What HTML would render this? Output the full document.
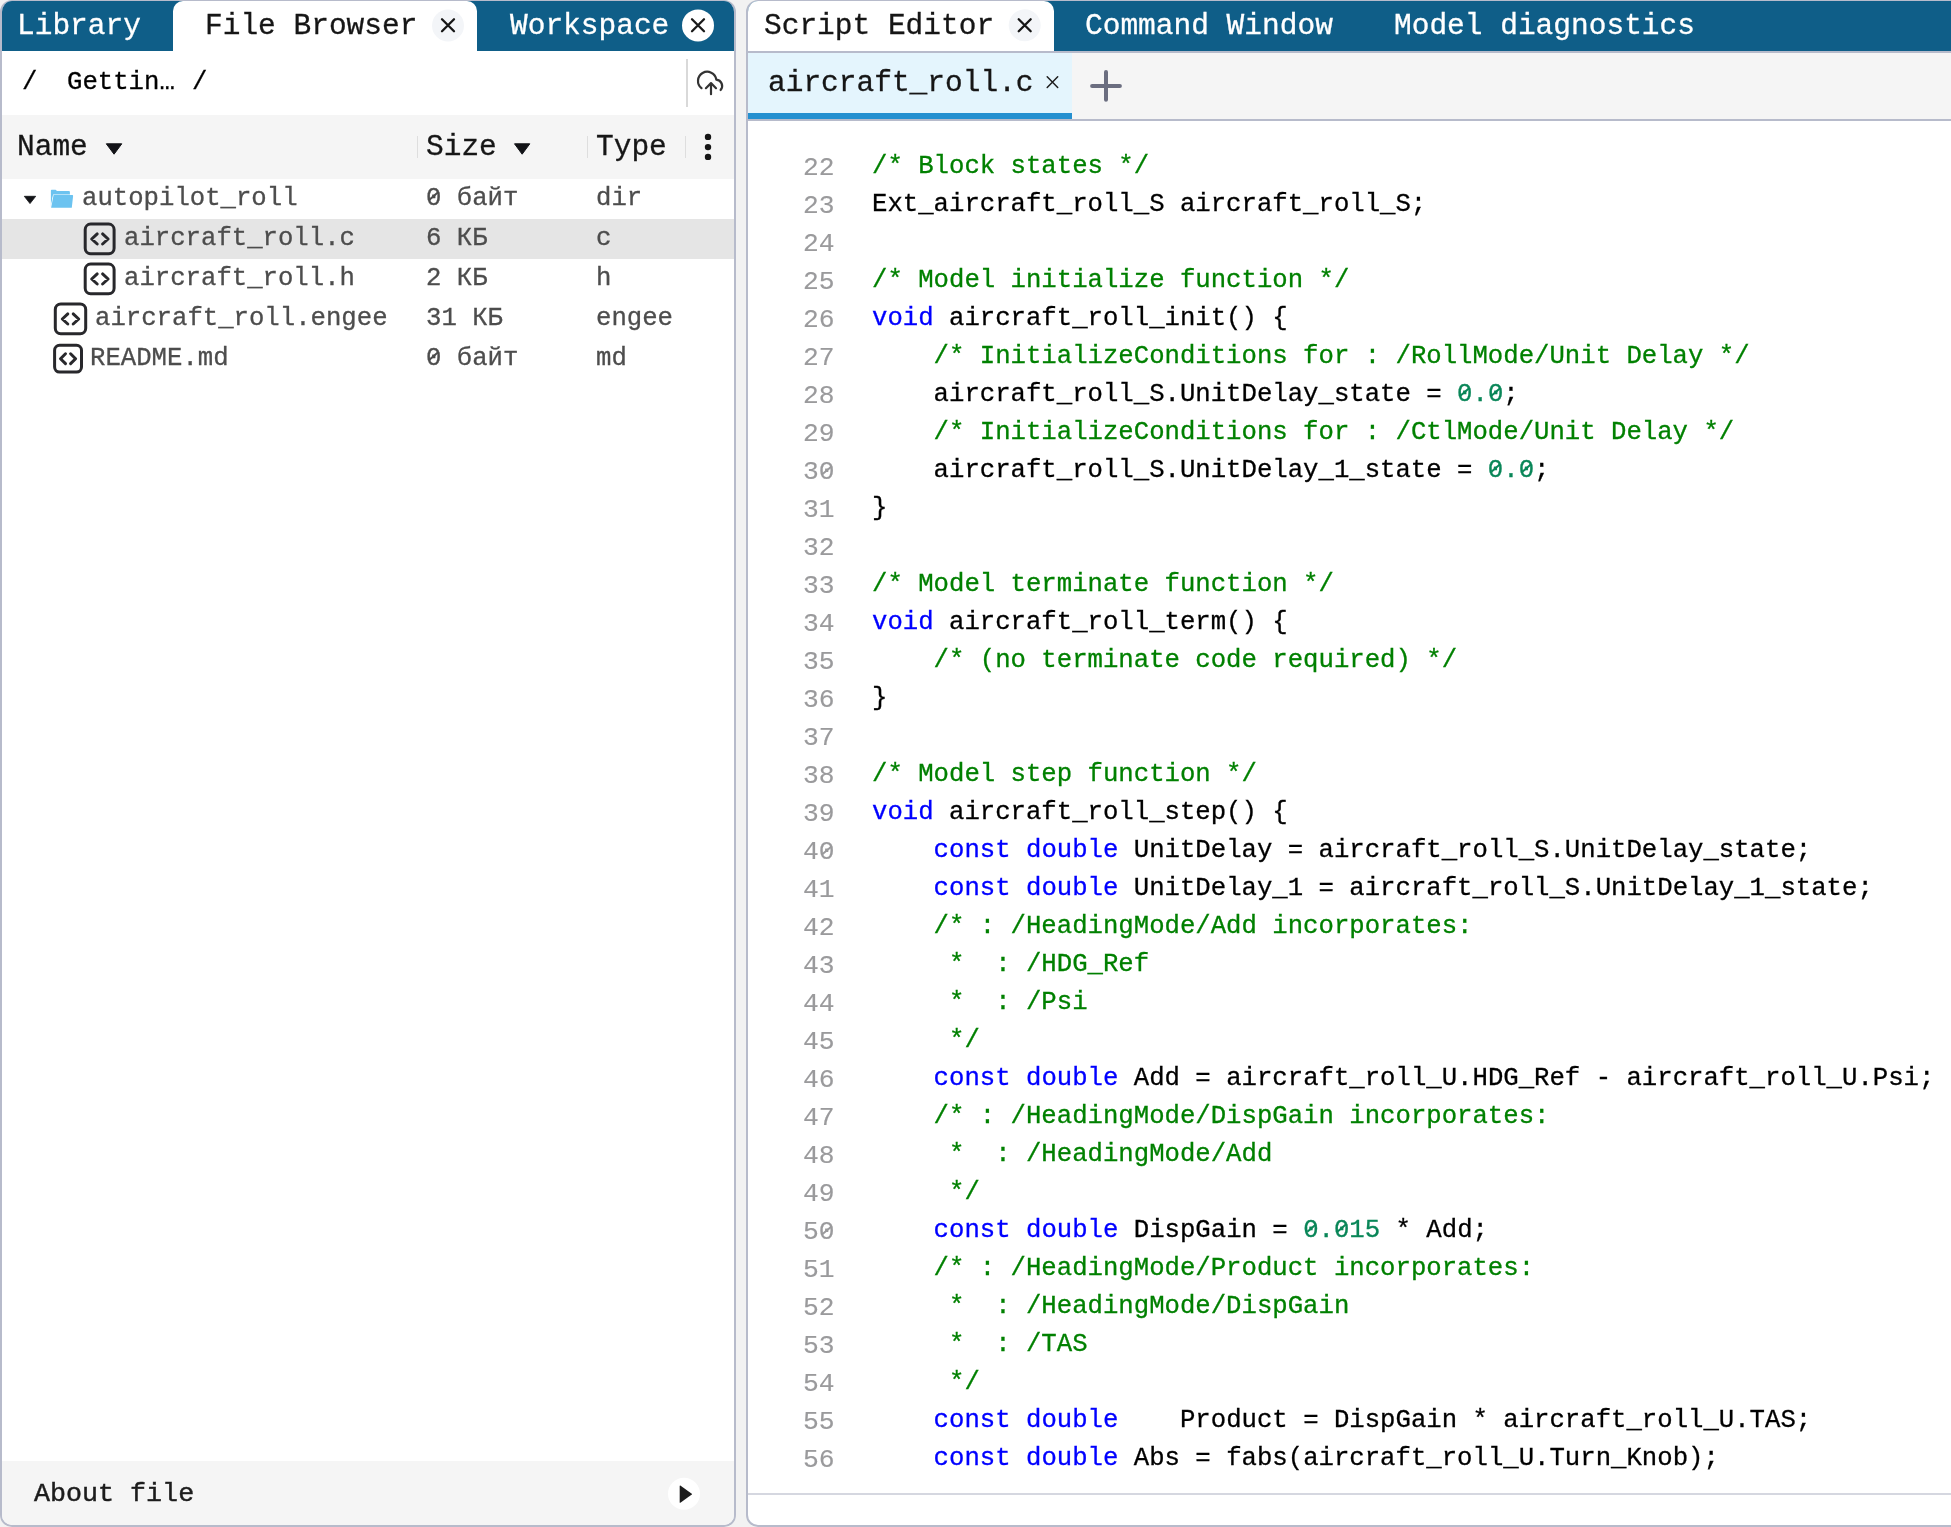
<!DOCTYPE html>
<html><head><meta charset="utf-8">
<style>
*{box-sizing:border-box;margin:0;padding:0}
html,body{width:1951px;height:1527px;overflow:hidden;background:#f2f2f2;font-family:"Liberation Mono",monospace;position:relative}
.a,.code,.gut{will-change:transform;-webkit-text-stroke:0.3px currentColor}
.a{position:absolute;white-space:pre}
.panel{position:absolute;background:#fff;border:2px solid #b7bbcb;border-top-width:1px;overflow:hidden}
.p{position:absolute}
.t{font-size:29.5px;line-height:50px;top:1px}
.w{color:#fff}
.d{color:#161616}
.h{font-size:29.5px;line-height:64px;top:115.15px;color:#161616}
.r{font-size:25.67px;line-height:40px;color:#4d4d4d}
.code{position:absolute;font-size:25.67px;line-height:38px;color:#000}
.gut{position:absolute;font-size:26.3px;line-height:38px;color:#9a9a9c;text-align:right;-webkit-text-stroke:0.15px currentColor}
.ln{height:38px;white-space:pre}
.cl{height:38px;white-space:pre}
.z{position:relative}
.z::after{content:"";position:absolute;left:2.4px;top:11.2px;width:11.4px;height:1.9px;background:currentColor;transform:rotate(-40deg)}
.gut .z::after{left:1.9px;top:11.6px;width:12.4px;height:1.6px}
.c{color:#008000}.k{color:#0000ff}.n{color:#098658}
</style></head>
<body>
<!-- LEFT PANEL backgrounds (inner coords = page - (2,1)) -->
<div class="panel" style="left:0;top:0;width:736px;height:1527px;border-radius:12px">
  <div class="p" style="left:0;top:0;right:0;height:50px;background:#0f5e88"></div>
  <div class="p" style="left:171px;top:0;width:304px;height:50px;background:#fff;border-radius:10px 10px 0 0"></div>
  <div class="p" style="left:684px;top:58px;width:2px;height:48px;background:#d9d9d9"></div>
  <div class="p" style="left:0;top:114px;right:0;height:64px;background:#f5f5f5"></div>
  <div class="p" style="left:414.5px;top:135px;width:1px;height:22px;background:#dedede"></div>
  <div class="p" style="left:584.5px;top:135px;width:1px;height:22px;background:#dedede"></div>
  <div class="p" style="left:682.5px;top:135px;width:1px;height:22px;background:#dedede"></div>
  <div class="p" style="left:0;top:218px;right:0;height:40px;background:#e5e5e5"></div>
  <div class="p" style="left:0;top:1460px;right:0;height:70px;background:#f5f5f5"></div>
</div>
<!-- RIGHT PANEL backgrounds (inner coords = page - (748,1)) -->
<div class="panel" style="left:746px;top:0;width:1230px;height:1527px;border-radius:12px">
  <div class="p" style="left:0;top:0;right:0;height:50px;background:#0f5e88"></div>
  <div class="p" style="left:0;top:0;width:306px;height:50px;background:#fff;border-radius:0 10px 0 0"></div>
  <div class="p" style="left:0;top:50px;right:0;height:2px;background:#b7bbcb"></div>
  <div class="p" style="left:0;top:52px;right:0;height:66px;background:#f5f5f5"></div>
  <div class="p" style="left:0;top:52px;width:324px;height:60px;background:#e4f5fd"></div>
  <div class="p" style="left:0;top:112px;width:324px;height:6px;background:#2490d0"></div>
  <div class="p" style="left:0;top:118px;right:0;height:2px;background:#b7bbcb"></div>
  <div class="p" style="left:0;top:1492px;right:0;height:2px;background:#d5d7e0"></div>
</div>

<!-- TEXT (page coords) -->
<div class="a t w" style="left:17.1px">Library</div>
<div class="a t d" style="left:204.5px">File Browser</div>
<div class="a t w" style="left:509.7px">Workspace</div>
<div class="a t d" style="left:763.9px">Script Editor</div>
<div class="a t w" style="left:1084.9px">Command Window</div>
<div class="a t w" style="left:1394.2px">Model diagnostics</div>

<div class="a r" style="left:22.4px;top:63.4px;color:#000">/</div>
<div class="a r" style="left:66.8px;top:63.4px;color:#000">Gettin…</div>
<div class="a r" style="left:192.3px;top:63.4px;color:#000">/</div>

<div class="a h" style="left:16.6px">Name</div>
<div class="a h" style="left:426.3px">Size</div>
<div class="a h" style="left:595.9px">Type</div>

<div class="a r" style="left:82.1px;top:179.4px">autopilot_roll</div>
<div class="a r" style="left:426px;top:179.4px"><span class="z">0</span> байт</div>
<div class="a r" style="left:595.5px;top:179.4px">dir</div>
<div class="a r" style="left:123.6px;top:219.4px">aircraft_roll.c</div>
<div class="a r" style="left:426px;top:219.4px">6 КБ</div>
<div class="a r" style="left:595.5px;top:219.4px">c</div>
<div class="a r" style="left:123.6px;top:259.4px">aircraft_roll.h</div>
<div class="a r" style="left:426px;top:259.4px">2 КБ</div>
<div class="a r" style="left:595.5px;top:259.4px">h</div>
<div class="a r" style="left:94.8px;top:299.4px">aircraft_roll.engee</div>
<div class="a r" style="left:426px;top:299.4px">31 КБ</div>
<div class="a r" style="left:595.5px;top:299.4px">engee</div>
<div class="a r" style="left:90.1px;top:339.4px">README.md</div>
<div class="a r" style="left:426px;top:339.4px"><span class="z">0</span> байт</div>
<div class="a r" style="left:595.5px;top:339.4px">md</div>

<div class="a" style="left:33.8px;top:1462px;font-size:26.7px;line-height:64px;color:#1c1c1c;-webkit-text-stroke:0.45px #1c1c1c">About file</div>

<div class="a" style="left:767.86px;top:52.55px;font-size:29.5px;line-height:60px;color:#161616">aircraft_roll.c</div>

<div class="gut" style="left:760px;top:149.2px;width:74.5px">
<div class="ln">22</div>
<div class="ln">23</div>
<div class="ln">24</div>
<div class="ln">25</div>
<div class="ln">26</div>
<div class="ln">27</div>
<div class="ln">28</div>
<div class="ln">29</div>
<div class="ln">3<span class="z">0</span></div>
<div class="ln">31</div>
<div class="ln">32</div>
<div class="ln">33</div>
<div class="ln">34</div>
<div class="ln">35</div>
<div class="ln">36</div>
<div class="ln">37</div>
<div class="ln">38</div>
<div class="ln">39</div>
<div class="ln">4<span class="z">0</span></div>
<div class="ln">41</div>
<div class="ln">42</div>
<div class="ln">43</div>
<div class="ln">44</div>
<div class="ln">45</div>
<div class="ln">46</div>
<div class="ln">47</div>
<div class="ln">48</div>
<div class="ln">49</div>
<div class="ln">5<span class="z">0</span></div>
<div class="ln">51</div>
<div class="ln">52</div>
<div class="ln">53</div>
<div class="ln">54</div>
<div class="ln">55</div>
<div class="ln">56</div>
</div>
<div class="code" style="left:872.15px;top:148px">
<div class="cl"><span class="c">/* Block states */</span></div>
<div class="cl">Ext_aircraft_roll_S aircraft_roll_S;</div>
<div class="cl">&nbsp;</div>
<div class="cl"><span class="c">/* Model initialize function */</span></div>
<div class="cl"><span class="k">void</span> aircraft_roll_init() {</div>
<div class="cl">    <span class="c">/* InitializeConditions for : /RollMode/Unit Delay */</span></div>
<div class="cl">    aircraft_roll_S.UnitDelay_state = <span class="n"><span class="z">0</span>.<span class="z">0</span></span>;</div>
<div class="cl">    <span class="c">/* InitializeConditions for : /CtlMode/Unit Delay */</span></div>
<div class="cl">    aircraft_roll_S.UnitDelay_1_state = <span class="n"><span class="z">0</span>.<span class="z">0</span></span>;</div>
<div class="cl">}</div>
<div class="cl">&nbsp;</div>
<div class="cl"><span class="c">/* Model terminate function */</span></div>
<div class="cl"><span class="k">void</span> aircraft_roll_term() {</div>
<div class="cl">    <span class="c">/* (no terminate code required) */</span></div>
<div class="cl">}</div>
<div class="cl">&nbsp;</div>
<div class="cl"><span class="c">/* Model step function */</span></div>
<div class="cl"><span class="k">void</span> aircraft_roll_step() {</div>
<div class="cl">    <span class="k">const</span> <span class="k">double</span> UnitDelay = aircraft_roll_S.UnitDelay_state;</div>
<div class="cl">    <span class="k">const</span> <span class="k">double</span> UnitDelay_1 = aircraft_roll_S.UnitDelay_1_state;</div>
<div class="cl">    <span class="c">/* : /HeadingMode/Add incorporates:</span></div>
<div class="cl"><span class="c">     *  : /HDG_Ref</span></div>
<div class="cl"><span class="c">     *  : /Psi</span></div>
<div class="cl"><span class="c">     */</span></div>
<div class="cl">    <span class="k">const</span> <span class="k">double</span> Add = aircraft_roll_U.HDG_Ref - aircraft_roll_U.Psi;</div>
<div class="cl">    <span class="c">/* : /HeadingMode/DispGain incorporates:</span></div>
<div class="cl"><span class="c">     *  : /HeadingMode/Add</span></div>
<div class="cl"><span class="c">     */</span></div>
<div class="cl">    <span class="k">const</span> <span class="k">double</span> DispGain = <span class="n"><span class="z">0</span>.<span class="z">0</span>15</span> * Add;</div>
<div class="cl">    <span class="c">/* : /HeadingMode/Product incorporates:</span></div>
<div class="cl"><span class="c">     *  : /HeadingMode/DispGain</span></div>
<div class="cl"><span class="c">     *  : /TAS</span></div>
<div class="cl"><span class="c">     */</span></div>
<div class="cl">    <span class="k">const</span> <span class="k">double</span>    Product = DispGain * aircraft_roll_U.TAS;</div>
<div class="cl">    <span class="k">const</span> <span class="k">double</span> Abs = fabs(aircraft_roll_U.Turn_Knob);</div>
</div>

<!-- ICONS (page coords) -->
<svg class="a" style="left:0;top:0" width="1951" height="1527" viewBox="0 0 1951 1527">
  <!-- File Browser close -->
  <circle cx="448" cy="25.5" r="16" fill="#f3f5f8"/>
  <path d="M442 19.2L454 31.3M454 19.2L442 31.3" stroke="#161616" stroke-width="2.3" stroke-linecap="round"/>
  <!-- Workspace close -->
  <circle cx="698" cy="25.4" r="16" fill="#fff"/>
  <path d="M692 19.2L704 31.3M704 19.2L692 31.3" stroke="#1a1a1a" stroke-width="2.3" stroke-linecap="round"/>
  <!-- Script editor close -->
  <circle cx="1024.7" cy="25.3" r="16" fill="#f3f5f8"/>
  <path d="M1018.7 19.2L1030.7 31.3M1030.7 19.2L1018.7 31.3" stroke="#161616" stroke-width="2.3" stroke-linecap="round"/>
  <!-- upload cloud -->
  <g fill="none" stroke="#333" stroke-width="2.2" stroke-linecap="round" stroke-linejoin="round">
    <path d="M701.5 88.2A9.2 9.2 0 1 1 716.3 79.6A6.3 6.3 0 0 1 720.6 90"/>
    <path d="M711 94.2V83.6M705.9 88.2L711 83.1L716 88.2"/>
  </g>
  <!-- sort triangles -->
  <path d="M106.3 143.8H121.8L114.05 154.2Z" fill="#121317" stroke="#121317" stroke-width="1" stroke-linejoin="round"/>
  <path d="M514.5 143.8H529.8L522.15 154.2Z" fill="#121317" stroke="#121317" stroke-width="1" stroke-linejoin="round"/>
  <!-- kebab -->
  <circle cx="708" cy="136.9" r="3.2" fill="#161616"/>
  <circle cx="708" cy="147.1" r="3.2" fill="#161616"/>
  <circle cx="708" cy="156.9" r="3.2" fill="#161616"/>
  <!-- tree caret -->
  <path d="M24.3 196.3H35.7L30 203.6Z" fill="#121317" stroke="#121317" stroke-width="0.8" stroke-linejoin="round"/>
  <!-- folder -->
  <path d="M50.9 190.4Q50.9 189.7 51.6 189.7H55.6L57 191.1H69Q69.9 191.1 69.9 191.9V196H53L50.9 207.8Z" fill="#6cc3f0"/>
  <path d="M53.6 195.1H72.4Q73.2 195.1 73.1 195.9L71.8 207.8H51.1Z" fill="#6cc3f0" stroke="#fff" stroke-width="1.3" paint-order="stroke"/>
  <!-- code icons -->
  <g fill="none" stroke="#28282c" stroke-width="3" stroke-linecap="round" stroke-linejoin="round">
    <rect x="85.2" y="224.1" width="28.9" height="29.7" rx="5.5"/>
    <path d="M97.2 233.9L91.7 239L97.2 244M102.6 233.9L108.1 239L102.6 244"/>
    <rect x="85.2" y="264.1" width="28.9" height="29.7" rx="5.5"/>
    <path d="M97.2 273.9L91.7 279L97.2 284M102.6 273.9L108.1 279L102.6 284"/>
    <rect x="55.3" y="304" width="30.4" height="29.7" rx="5.5"/>
    <path d="M67.8 313.9L62.3 319L67.8 324M73.2 313.9L78.7 319L73.2 324"/>
    <rect x="54.6" y="345.3" width="26.9" height="26.8" rx="5"/>
    <path d="M65.5 353.8L60.5 358.7L65.5 363.6M70.6 353.8L75.6 358.7L70.6 363.6"/>
  </g>
  <!-- about play -->
  <circle cx="684" cy="1493.7" r="16" fill="#fff"/>
  <path d="M680.3 1485.6Q679.7 1485.3 679.7 1486V1502.3Q679.7 1503.1 680.4 1502.7L691.8 1494.6Q692.3 1494.2 691.8 1493.8Z" fill="#1c1c1c"/>
  <!-- subtab close -->
  <path d="M1047.2 76.8L1057.7 87.5M1057.7 76.8L1047.2 87.5" stroke="#1e1e1e" stroke-width="1.5" stroke-linecap="round"/>
  <!-- plus -->
  <path d="M1106 72V99.8M1092.1 85.9H1119.9" stroke="#6b6e80" stroke-width="4" stroke-linecap="round"/>
</svg>
</body></html>
